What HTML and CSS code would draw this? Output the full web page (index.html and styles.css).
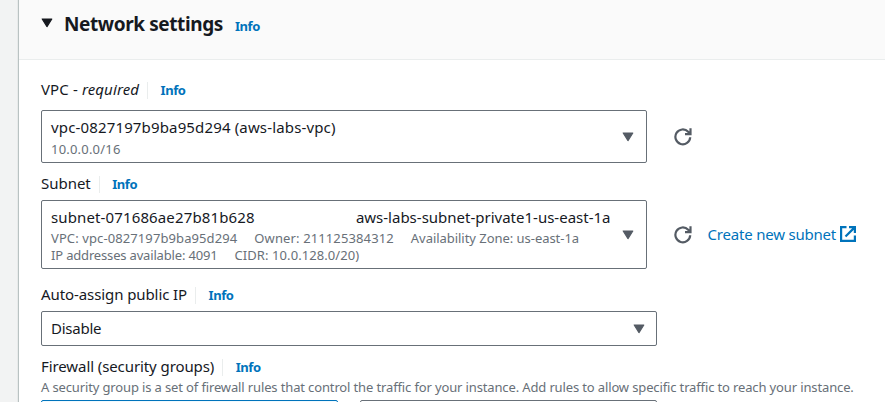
FILE: index.html
```html
<!DOCTYPE html>
<html lang="en">
<head>
<meta charset="utf-8">
<title>Network settings</title>
<link rel="stylesheet" href="styles.css">
</head>
<body>
<svg class="defs" width="0" height="0">
  <symbol id="refresh" viewBox="0 0 18 18"><path d="M16.2 9.2A7.4 7.4 0 1 1 14.2 3.8L15.8 5.6M16.5 .3V6.1H11" fill="none" stroke="currentColor" stroke-width="2.2"/></symbol>
  <symbol id="caret" viewBox="0 0 12 10"><path d="M1.2 1H10.8L6 8.6Z" fill="currentColor" stroke="currentColor" stroke-width="1.2" stroke-linejoin="round"/></symbol>
</svg>
<main class="panel">
  <header class="header">
    <svg class="caret"><use href="#caret"/></svg>
    <h2>Network settings</h2>
    <a class="info">Info</a>
  </header>
  <div class="content">
    <div class="label"><span class="t-vpc">VPC - <i>required</i></span><a class="info">Info</a></div>
    <div class="row vpc-row">
      <div class="select">
        <div class="value">
          <div class="main t-vpcid">vpc-0827197b9ba95d294 (aws-labs-vpc)</div>
          <div class="sub t-cidr">10.0.0.0/16</div>
        </div>
        <svg class="caret"><use href="#caret"/></svg>
      </div>
      <svg class="refresh"><use href="#refresh"/></svg>
    </div>
    <div class="label"><span class="t-subnet">Subnet</span><a class="info">Info</a></div>
    <div class="row subnet-row">
      <div class="select">
        <div class="value">
          <div class="main split"><span class="t-subid">subnet-071686ae27b81b628</span><span class="t-name">aws-labs-subnet-private1-us-east-1a</span></div>
          <div class="sub tags"><span class="t-v">VPC: vpc-0827197b9ba95d294</span><span class="t-o">Owner: 211125384312</span><span class="t-z">Availability Zone: us-east-1a</span></div>
          <div class="sub tags"><span class="t-ip">IP addresses available: 4091</span><span class="t-c">CIDR: 10.0.128.0/20)</span></div>
        </div>
        <svg class="caret"><use href="#caret"/></svg>
      </div>
      <svg class="refresh"><use href="#refresh"/></svg>
      <a class="create"><span>Create new subnet</span><svg width="16" height="16" viewBox="0 0 16 16"><path d="M6.5 1.1H1.1V14.9H14.9V9.5M9 1.1H14.9V7M14.9 1.1L5.5 10.5" fill="none" stroke="currentColor" stroke-width="2.2"/></svg></a>
    </div>
    <div class="label"><span class="t-auto">Auto-assign public IP</span><a class="info">Info</a></div>
    <div class="select ip-select">
      <div class="main t-dis">Disable</div>
      <svg class="caret"><use href="#caret"/></svg>
    </div>
    <div class="label"><span class="t-fire">Firewall (security groups)</span><a class="info">Info</a></div>
    <p class="desc">A security group is a set of firewall rules that control the traffic for your instance. Add rules to allow specific traffic to reach your instance.</p>
    <div class="tiles"><div class="tile selected"></div><div class="tile"></div></div>
  </div>
</main>
</body>
</html>
```
FILE: styles.css
```css
* { box-sizing: border-box; }
html, body { height: 100%; margin: 0; }
body {
  overflow: hidden;
  padding-left: 18px;
  background: #f2f3f3;
  color: #16191f;
  font: 15px/18px "Noto Sans", sans-serif;
}
.defs { position: absolute; }
.panel {
  height: 402px;
  overflow: hidden;
  border-left: 1px solid #b9c2c2;
  background: #fff;
  box-shadow: 0 0 1px 0 #b5bebe;
}
.header {
  display: flex;
  align-items: baseline;
  height: 60px;
  padding: 11px 0 0 22px;
  border-bottom: 1px solid #eaeded;
  background: #fafafa;
}
.header .caret { align-self: flex-start; margin-top: 7px; color: #16191f; }
h2 { margin: 0 12px 0 11px; font-size: 19px; line-height: 26px; letter-spacing: -0.4px; white-space: nowrap; }
.content { padding: 20px 0 0 22px; }
.info { color: #0073bb; font-size: 13px; font-weight: 700; letter-spacing: -0.45px; }
.label { display: flex; align-items: baseline; height: 18px; white-space: nowrap; }
.label .info { position: relative; margin-left: 21.5px; }
.label .info::before {
  content: "";
  position: absolute;
  left: -13.5px;
  top: 1px;
  width: 1px;
  height: 17px;
  background: #eaeded;
}
.row { display: flex; align-items: center; }
.vpc-row { margin: 12px 0 11px; }
.subnet-row { margin: 8px 0 16px; }
.select {
  display: flex;
  justify-content: space-between;
  align-items: center;
  width: 606px;
  padding: 0 12px 0 9px;
  border: 1px solid #687078;
  border-radius: 2px;
  white-space: nowrap;
}
.vpc-row .select { height: 53px; }
.subnet-row .select { height: 69px; }
.ip-select { width: 616px; height: 35px; margin: 8px 0 11px; padding-right: 11.5px; }
.caret { flex: none; width: 12px; height: 10px; color: #545b64; }
.value { width: 559.5px; }
.main { line-height: 22px; }
.ip-select .main { padding-bottom: 2px; }
.sub { color: #687078; font-size: 13px; line-height: 17px; }
.vpc-row .sub { margin-top: 3px; }
.split { display: flex; justify-content: space-between; margin-bottom: 2px; }
.tags { display: flex; gap: 17px; }
.refresh { flex: none; width: 18px; height: 18px; margin: 0 0 0 27px; color: #545b64; }
.create { display: flex; align-items: center; gap: 4px; margin: -2px 0 0 15.5px; color: #0073bb; letter-spacing: -0.2px; white-space: nowrap; }
.create svg { position: relative; top: 0.5px; }
.desc { margin: 4px 0 0; color: #687078; font-size: 13px; line-height: 17px; letter-spacing: -0.135px; white-space: nowrap; }
.tiles { display: flex; gap: 22px; margin-top: 4px; }
.tile { width: 297px; height: 40px; border: 1px solid #687078; border-radius: 2px; }
.selected { border-color: #0073bb; background: #f1faff; }
.t-vpc { letter-spacing: 0.12px; }
.t-vpcid { letter-spacing: 0.15px; }
.t-cidr { letter-spacing: 0.2px; }
.t-subnet { letter-spacing: -0.03px; }
.t-subid { letter-spacing: 0.13px; }
.t-name { letter-spacing: 0; }
.t-v { letter-spacing: 0.1px; }
.t-o { letter-spacing: 0.12px; }
.t-z { letter-spacing: -0.04px; }
.t-ip { letter-spacing: -0.17px; }
.t-c { letter-spacing: 0.08px; }
.t-auto { letter-spacing: -0.09px; }
.t-dis { letter-spacing: -0.25px; }
.t-fire { letter-spacing: -0.09px; }
```
